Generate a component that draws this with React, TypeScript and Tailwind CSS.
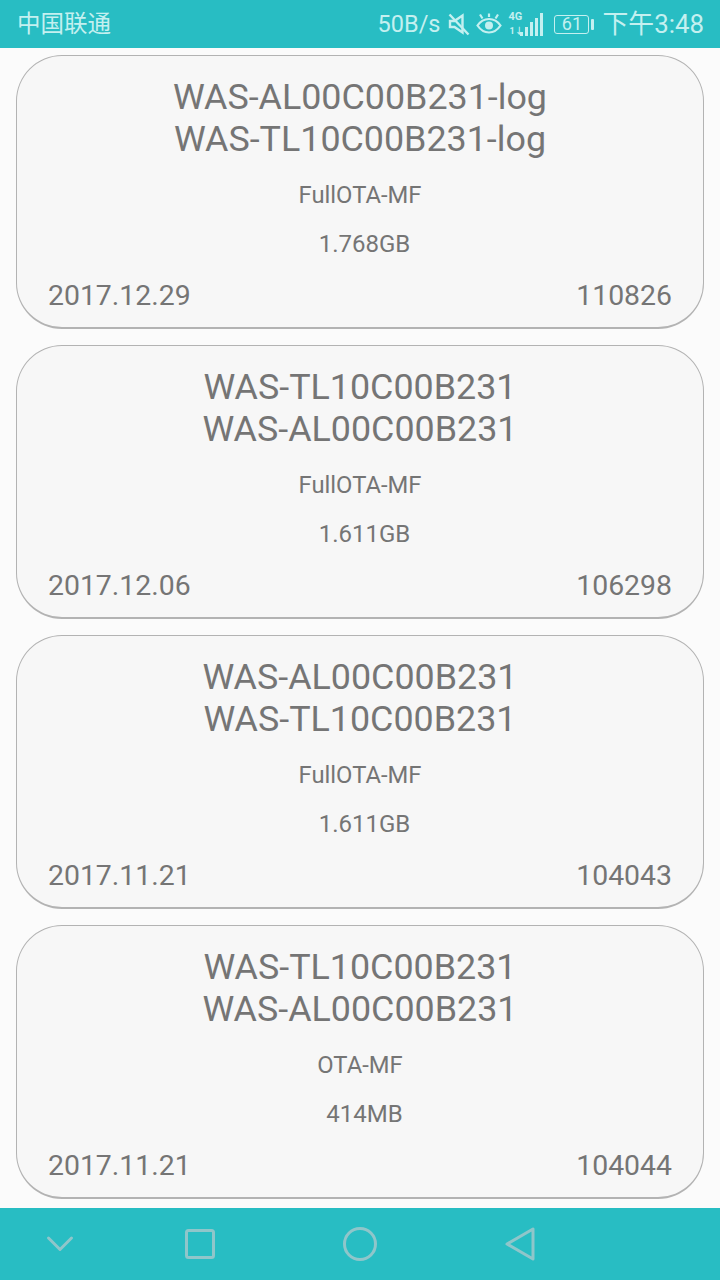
import React from "react";

const cards = [
  { a: "WAS-AL00C00B231-log", b: "WAS-TL10C00B231-log", t: "FullOTA-MF", s: "1.768GB", d: "2017.12.29", n: "110826" },
  { a: "WAS-TL10C00B231", b: "WAS-AL00C00B231", t: "FullOTA-MF", s: "1.611GB", d: "2017.12.06", n: "106298" },
  { a: "WAS-AL00C00B231", b: "WAS-TL10C00B231", t: "FullOTA-MF", s: "1.611GB", d: "2017.11.21", n: "104043" },
  { a: "WAS-TL10C00B231", b: "WAS-AL00C00B231", t: "OTA-MF", s: "414MB", d: "2017.11.21", n: "104044" },
];

function Card({ c }: { c: (typeof cards)[number] }) {
  return (
    <div className="h-[274px] rounded-[46px] border border-b-2 border-[#b3b3b3] bg-[#f7f7f7] flex flex-col items-center pt-[20px] px-[31px] text-[#757575]">
      <div className="text-[35.850px] leading-[42px] text-center">{c.a}</div>
      <div className="text-[35.850px] leading-[42px] text-center">{c.b}</div>
      <div className="text-[23.800px] leading-[28px] mt-[21px]">{c.t}</div>
      <div className="text-[24px] leading-[28px] mt-[21px] ml-[9px]">{c.s}</div>
      <div className="w-full flex justify-between text-[28.400px] leading-[32px] mt-[22px]">
        <span>{c.d}</span>
        <span>{c.n}</span>
      </div>
    </div>
  );
}

function StatusIcons() {
  return (
    <>
      <svg width="22" height="23" viewBox="0 0 22 23" className="ml-[8px]" fill="none" stroke="#c4f0f0" strokeWidth="2.4">
        <path d="M2 8h4.500l8-5.500v17l-8-5.500H2z" />
        <path d="M1.500 1.500l19 20" />
      </svg>
      <svg width="26" height="22" viewBox="0 0 26 22" className="ml-[6px]" fill="none" stroke="#c4f0f0" strokeWidth="2.2">
        <path d="M1.500 12.500c3-4.500 7-6.500 11.500-6.500s8.500 2 11.500 6.500c-3 4.500-7 7-11.500 7s-8.500-2.500-11.500-7z" />
        <circle cx="13" cy="12.500" r="4" fill="#c4f0f0" stroke="none" />
        <path d="M4 1.500l2.500 4M22 1.500l-2.500 4M13 0.500v3.500" />
      </svg>
      <div className="ml-[6px] relative w-[35px] h-[24px]">
        <span className="absolute left-0 top-0 text-[11px] leading-[10px] font-bold text-[#c4f0f0]">4G</span>
        <span className="absolute left-[1px] top-[15px] text-[9px] leading-[9px] font-bold text-[#c4f0f0]">1↓</span>
        <div className="absolute right-0 bottom-0 flex items-end gap-[2px]">
          <div className="w-[3px] h-[4px] bg-[#c4f0f0]" />
          <div className="w-[3px] h-[9px] bg-[#c4f0f0]" />
          <div className="w-[3px] h-[14px] bg-[#c4f0f0]" />
          <div className="w-[3px] h-[18px] bg-[#c4f0f0]" />
          <div className="w-[3px] h-[23px] bg-[#c4f0f0]" />
        </div>
      </div>
      <div className="ml-[11px] w-[35px] h-[19px] rounded-[3px] border border-[#c4f0f0] flex items-center justify-center text-[18px] leading-none">61</div>
      <div className="ml-[2px] w-[3px] h-[11px] rounded-[1px] bg-[#c4f0f0]" />
    </>
  );
}

export default function App() {
  return (
    <div
      className="w-[720px] h-[1280px] flex flex-col bg-[#fbfbfb] overflow-hidden"
      style={{ fontFamily: 'Roboto, "Noto Sans CJK SC", sans-serif' }}
    >
      <div className="h-[48px] shrink-0 bg-[#28bdc3] flex items-center pl-[17px] pr-[16px] text-[#c4f0f0]">
        <span className="text-[23.500px] leading-none mt-[1px]">中国联通</span>
        <div className="ml-auto flex items-center">
          <span className="text-[23.500px] leading-none mt-[2px]">50B/s</span>
          <StatusIcons />
          <span className="ml-[8px] text-[25.850px] leading-none mt-[2px]">下午3:48</span>
        </div>
      </div>
      <div className="flex-1 flex flex-col gap-[16px] pt-[7px] px-[16px]">
        {cards.map((c, i) => (
          <Card key={i} c={c} />
        ))}
      </div>
      <div className="h-[72px] shrink-0 bg-[#28bdc3] relative">
        <svg width="720" height="72" viewBox="0 0 720 72" fill="none" stroke="#8fc6ca" strokeWidth="3" strokeLinejoin="round" strokeLinecap="round">
          <path d="M48.500 30l11.500 11.500L71.500 30" />
          <rect x="186.500" y="22.500" width="27" height="27" rx="2" />
          <circle cx="360" cy="36" r="15.500" />
          <path d="M533 21v30l-26-15z" />
        </svg>
      </div>
    </div>
  );
}
